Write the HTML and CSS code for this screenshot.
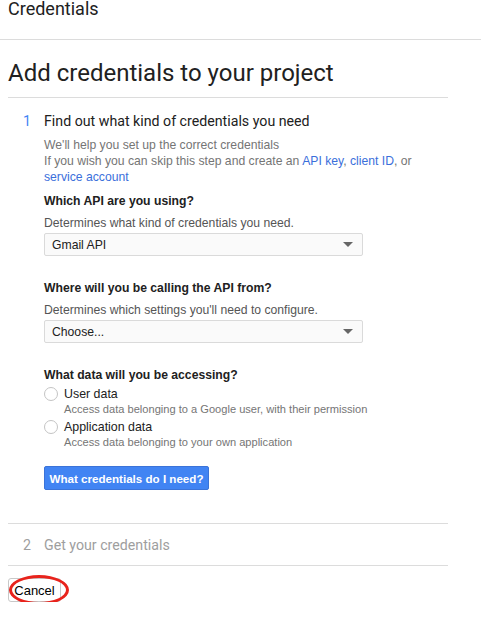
FILE: index.html
```html
<!DOCTYPE html>
<html>
<head>
<meta charset="utf-8">
<link rel="stylesheet" href="styles.css">
</head>
<body>
<header class="topbar"><div class="topbar-title">Credentials</div></header>
<main class="main">
  <h1 class="page-title">Add credentials to your project</h1>
  <section class="step step-active">
    <div class="step-head"><span class="step-num">1</span><span class="step-title">Find out what kind of credentials you need</span></div>
    <div class="step-body">
      <p class="intro">We'll help you set up the correct credentials<br>If you wish you can skip this step and create an <a class="link">API key</a>, <a class="link">client ID</a>, or<br><a class="link">service account</a></p>
      <div class="field field-first">
        <div class="field-label">Which API are you using?</div>
        <div class="field-desc">Determines what kind of credentials you need.</div>
        <div class="select"><span>Gmail API</span><span class="caret"></span></div>
      </div>
      <div class="field">
        <div class="field-label">Where will you be calling the API from?</div>
        <div class="field-desc">Determines which settings you'll need to configure.</div>
        <div class="select"><span>Choose...</span><span class="caret"></span></div>
      </div>
      <div class="field">
        <div class="field-label">What data will you be accessing?</div>
        <div class="radio-opt">
          <span class="radio"></span>
          <div class="radio-text"><div class="radio-label">User data</div><div class="radio-desc">Access data belonging to a Google user, with their permission</div></div>
        </div>
        <div class="radio-opt">
          <span class="radio"></span>
          <div class="radio-text"><div class="radio-label">Application data</div><div class="radio-desc">Access data belonging to your own application</div></div>
        </div>
      </div>
      <button class="primary-btn">What credentials do I need?</button>
    </div>
  </section>
  <section class="step step-inactive">
    <div class="step-head"><span class="step-num">2</span><span class="step-title">Get your credentials</span></div>
  </section>
  <div class="actions">
    <span class="cancel-wrap"><button class="cancel-btn">Cancel</button><span class="annot"></span></span>
  </div>
</main>
</body>
</html>
```
FILE: styles.css
```css
html, body { margin: 0; padding: 0; background: #fff; }
body { font-family: "Liberation Sans", Arial, sans-serif; color: #212121; width: 481px; overflow: hidden; }

.topbar { height: 40px; border-bottom: 1px solid #dcdcdc; box-sizing: content-box; }
.topbar-title { font-family: Roboto, sans-serif; font-size: 18px; line-height: 20px; padding-left: 8px; margin-top: -1px; color: #212121; }

.main { margin: 0 33px 0 8px; width: 440px; }
.page-title { font-family: Roboto, sans-serif; font-weight: 400; font-size: 24px; line-height: 28px; margin: 19px 0 0 0; padding-bottom: 10px; border-bottom: 1px solid #dcdcdc; color: #212121; }

.step { border-bottom: 1px solid #dcdcdc; }
.step-active { padding: 13px 0 33px 0; }
.step-inactive { padding: 11px 0 10px 0; }
.step-head { display: flex; font-family: Roboto, sans-serif; font-size: 14.2px; line-height: 20px; }
.step-num { width: 36px; padding-left: 15px; box-sizing: border-box; color: #4285f4; }
.step-title { color: #212121; }
.step-inactive .step-num, .step-inactive .step-title { color: #9e9e9e; }

.step-body { padding-left: 36px; }
.intro { margin: 6px 0 0 0; font-size: 12.2px; line-height: 16px; color: #757575; }
.link { color: #3b6fdb; text-decoration: none; }

.field { margin-top: 24px; }
.field-first { margin-top: 8px; }
.field-label { font-size: 12.2px; line-height: 16px; font-weight: 700; color: #212121; }
.field-desc { font-size: 12.2px; line-height: 16px; color: #555; margin-top: 6px; }
.select { margin-top: 2px; width: 319px; height: 23px; box-sizing: border-box; border: 1px solid #dadada; border-radius: 2px; background: #fafafa; display: flex; align-items: center; justify-content: space-between; padding: 0 9px 0 7px; font-size: 12.2px; color: #212121; }
.caret { width: 0; height: 0; border-left: 5px solid transparent; border-right: 5px solid transparent; border-top: 5px solid #666; }

.radio-opt { display: flex; margin-top: 3px; }
.radio-opt + .radio-opt { margin-top: 2px; }
.radio { width: 14px; height: 14px; box-sizing: border-box; border: 1px solid #c4c4c4; border-radius: 50%; background: #fff; margin-top: 1px; margin-right: 6px; flex: none; }
.radio-label { font-size: 12.4px; line-height: 16px; color: #212121; }
.radio-desc { font-size: 11.1px; line-height: 15px; color: #757575; }

.primary-btn { margin-top: 16px; display: block; height: 24px; width: 165px; border: 1px solid #3b73d8; border-radius: 2px; background: #4184f3; color: #fff; font-family: "Liberation Sans", Arial, sans-serif; font-weight: 700; font-size: 11.6px; padding: 0; }

.actions { padding-top: 12px; }
.cancel-wrap { position: relative; display: inline-block; }
.cancel-btn { display: block; height: 24px; width: 53px; padding: 0; border: 1px solid #c8c8c8; border-radius: 3px; background: #fff; font-family: "Liberation Sans", Arial, sans-serif; font-size: 13px; color: #000; }
.annot { position: absolute; left: 1px; top: -3px; width: 60px; height: 30px; box-sizing: border-box; border: 3px solid #e8231c; border-radius: 50%; }
```
